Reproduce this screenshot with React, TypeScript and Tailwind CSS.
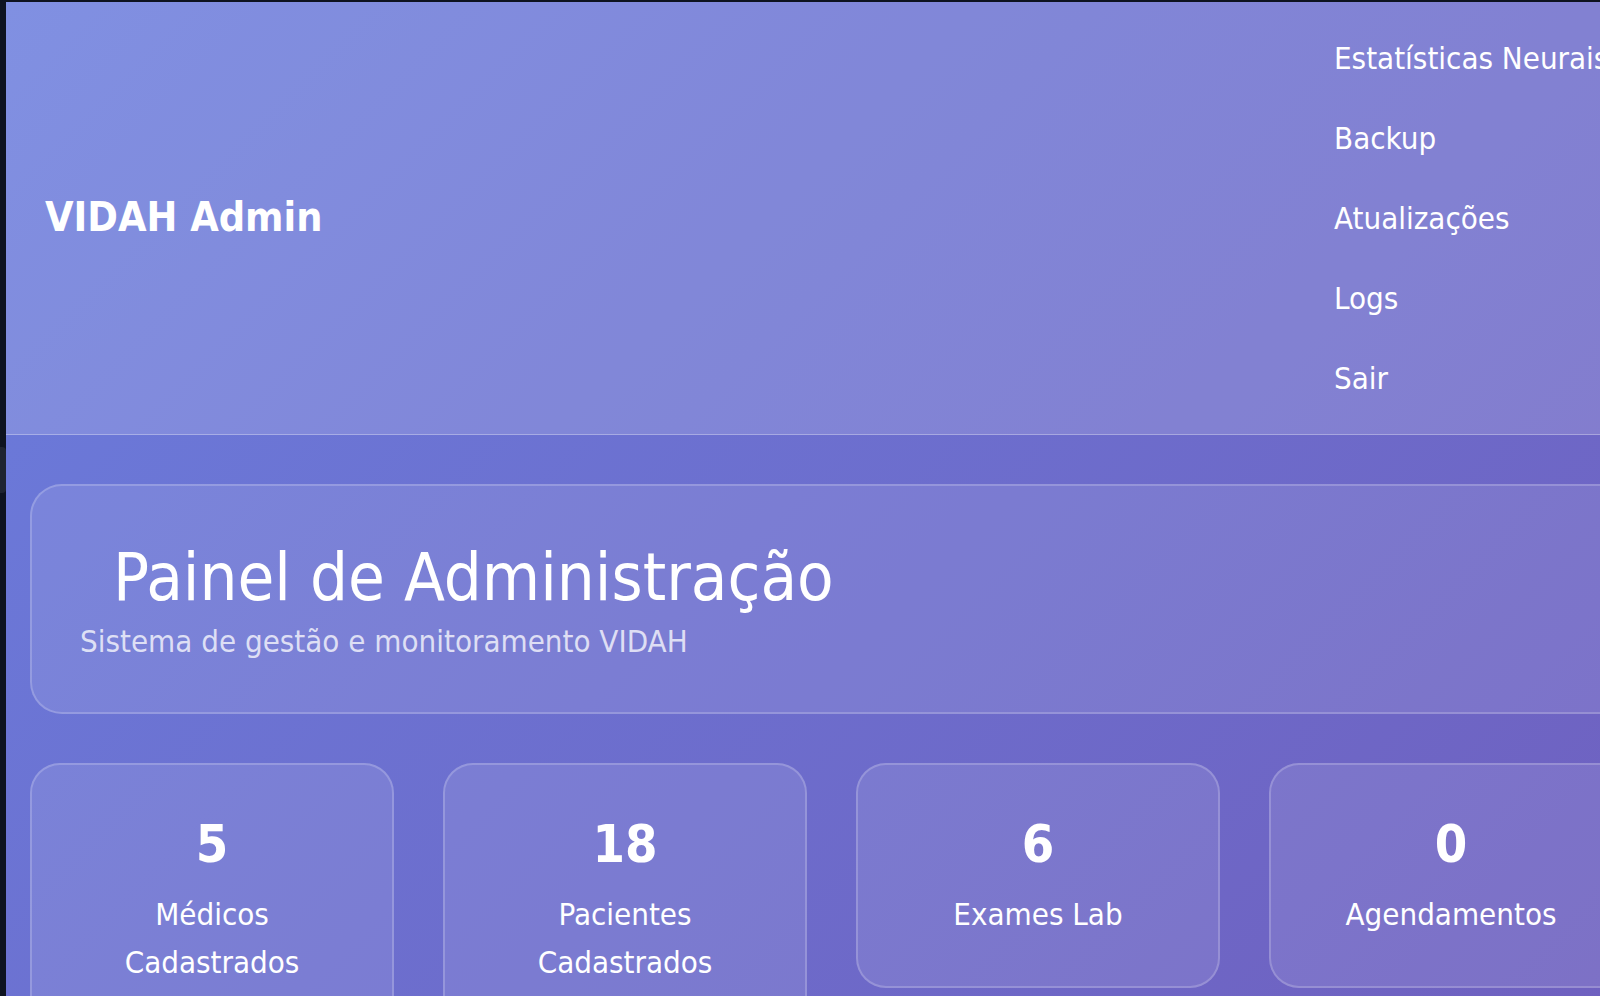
const stats = [
  { value: "5", label: "Médicos Cadastrados" },
  { value: "18", label: "Pacientes Cadastrados" },
  { value: "6", label: "Exames Lab" },
  { value: "0", label: "Agendamentos" },
]

const navItems = ["Estatísticas Neurais", "Backup", "Atualizações", "Logs", "Sair"]

export default function App() {
  return (
    <div className="h-[996px] w-full overflow-hidden bg-[#0e1320] pt-[2px] font-['DejaVu_Sans_Condensed','DejaVu_Sans',sans-serif] font-stretch-condensed text-white">
      <div className="flex h-full">
        {/* window edge */}
        <div className="relative w-[6px] shrink-0 bg-[#0e1320]">
          <div className="absolute left-0 top-[445px] h-[46px] w-[6px] rounded-r bg-[#1f2431]"></div>
        </div>

        <div className="w-[1654px] shrink-0 bg-[linear-gradient(135deg,#6a7ddd_0%,#6f60bf_100%)]">
          <header className="flex items-center justify-between border-b border-white/30 bg-white/15 px-[39px] py-[32px]">
            <div className="text-[41px] font-bold">VIDAH Admin</div>
            <ul className="flex w-[287px] flex-col gap-[32px] whitespace-nowrap text-[31px] leading-[48px]">
              {navItems.map((item) => (
                <li key={item}>
                  <a href="#">{item}</a>
                </li>
              ))}
            </ul>
          </header>

          <main className="px-[24px] pt-[49px]">
            <section className="h-[230px] rounded-[32px] border-2 border-white/20 bg-white/10 px-[48px] pt-[52px]">
              <h1 className="pl-[33px] text-[66.6px] leading-[1.2]">Painel de Administração</h1>
              <p className="mt-[3px] text-[31px] leading-[1.3] text-white/75">Sistema de gestão e monitoramento VIDAH</p>
            </section>

            <div className="mt-[49px] flex items-start gap-[49px]">
              {stats.map((s) => (
                <div
                  key={s.label}
                  className="w-[364px] shrink-0 rounded-[30px] border-2 border-white/20 bg-white/10 px-[40px] py-[48px] text-center"
                >
                  <div className="text-[52px] font-bold leading-[1.2]">{s.value}</div>
                  <div className="mt-[15px] text-[31px] leading-[48px]">{s.label}</div>
                </div>
              ))}
            </div>
          </main>
        </div>
      </div>
    </div>
  )
}
